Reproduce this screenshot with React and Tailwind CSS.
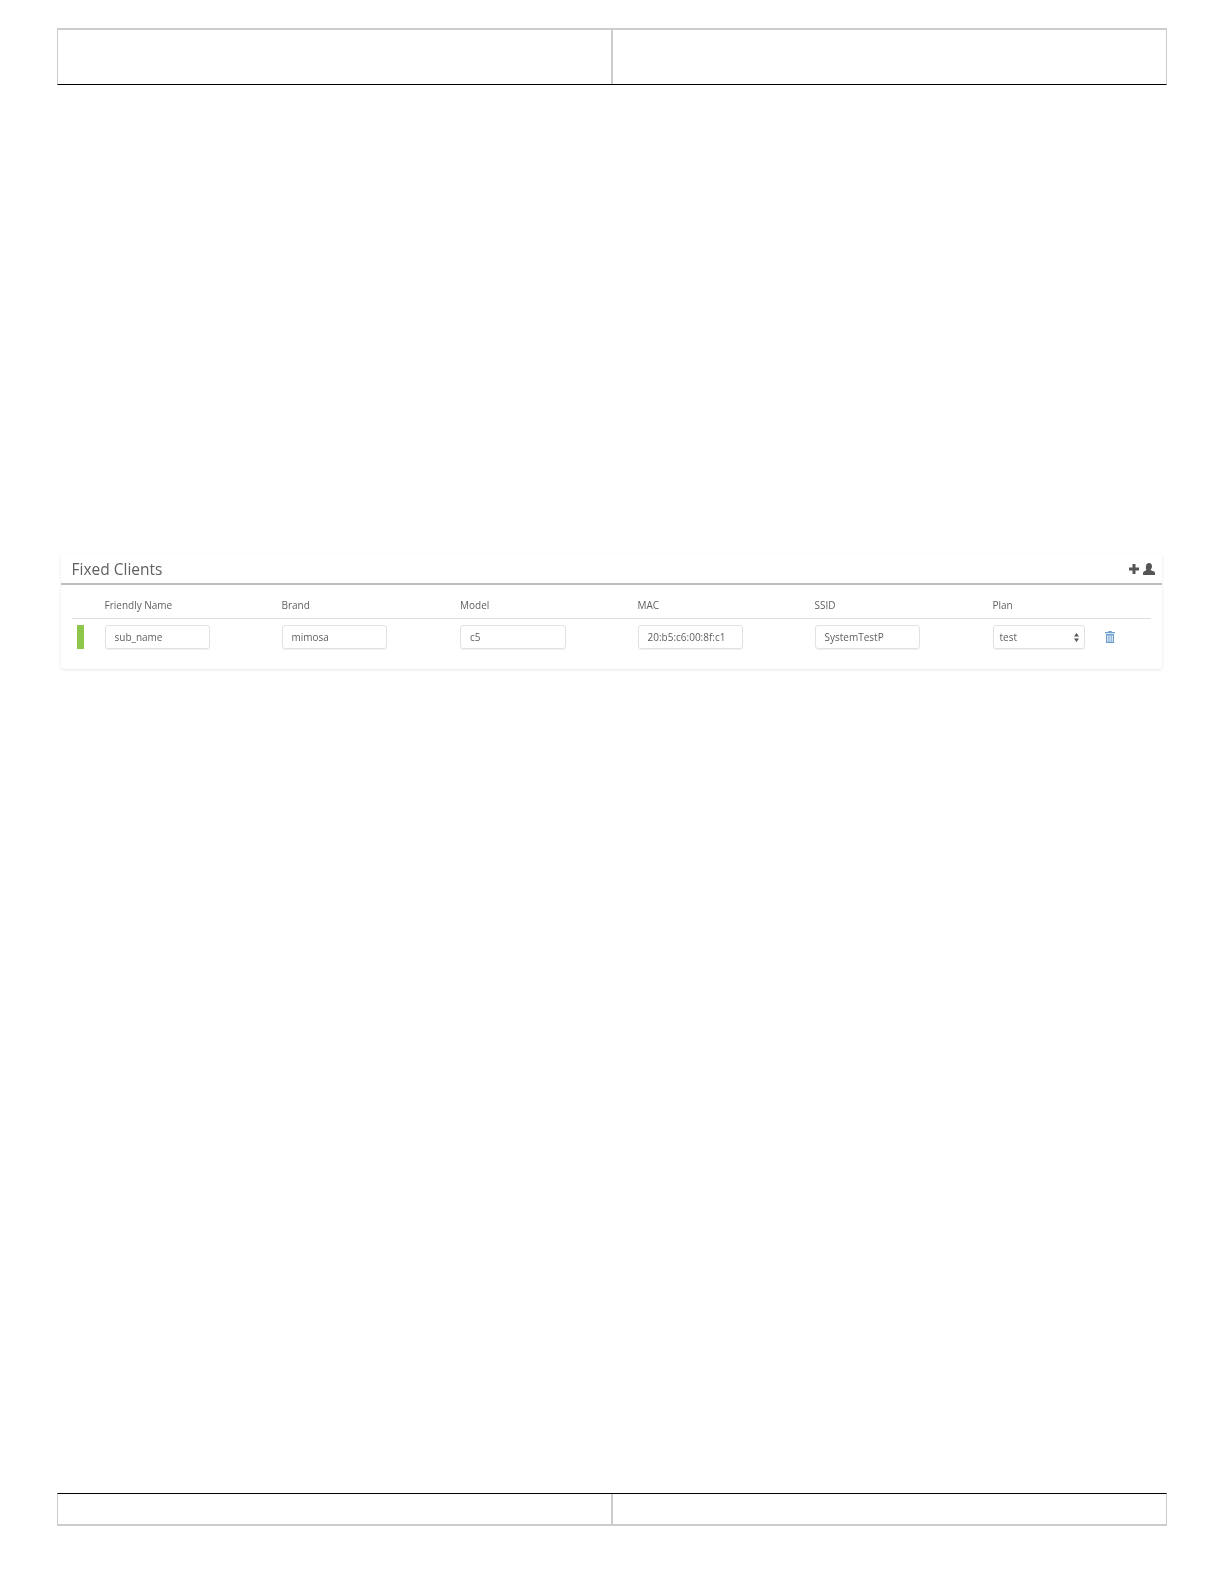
import React from "react";

const columns = [
  { label: "Friendly Name", value: "sub_name" },
  { label: "Brand", value: "mimosa" },
  { label: "Model", value: "c5" },
  { label: "MAC", value: "20:b5:c6:00:8f:c1" },
  { label: "SSID", value: "SystemTestP" },
];

const rowGrid = "grid grid-cols-[33px_177px_178.5px_177.5px_177px_178px_1fr] mx-[11px]";

function BorderTable({ height, topClass, bottomClass }) {
  return (
    <div
      className={`grid grid-cols-[555px_555px] w-[1110px] border-x border-x-[#cccccc] box-border ${height} ${topClass} ${bottomClass}`}
    >
      <div className="border-r-2 border-r-[#cccccc]" />
      <div />
    </div>
  );
}

function PlusUser() {
  return (
    <div className="flex items-center gap-[4px] text-[#555555] -mt-[2px]">
      <svg width="10" height="10" viewBox="0 0 10 10" fill="currentColor">
        <path d="M3.500 0h3v3.500H10v3H6.500V10h-3V6.500H0v-3h3.500z" />
      </svg>
      <svg width="12" height="12" viewBox="0 0 12 12" fill="currentColor">
        <path d="M6 0c1.900 0 3 1.300 3 3.200 0 1.300-.5 2.400-1.200 3.100-.3.3-.3.8.1 1L11 8.600c.7.3 1 .8 1 1.400v2H0v-2c0-.6.3-1.100 1-1.400l2.100-1.300c.4-.2.4-.7.1-1C2.500 5.600 3 4.500 3 3.200 3 1.300 4.100 0 6 0z" />
      </svg>
    </div>
  );
}

function Trash() {
  return (
    <svg width="10" height="12" viewBox="0 0 10 12" fill="#6c9fd0">
      <path d="M3.500 0h3l.5 1h3v1.200H0V1h3z" />
      <path
        d="M1 3h8v9H1zm1.300 1.200v6.600h1.100V4.200zm2.200 0v6.600h1.100V4.200zm2.200 0v6.600h1V4.200z"
        fillRule="evenodd"
      />
    </svg>
  );
}

function FixedClients() {
  return (
    <div className="ml-[3.5px] w-[1101px] mt-[468px] h-[116px] bg-white rounded-[3px] shadow-[0_1px_3px_rgba(0,0,0,0.1)] font-['Open_Sans',sans-serif] blur-[0.35px]">
      <div className="h-[32px] pt-[3px] flex items-center justify-between pl-[11px] pr-[7px] border-b-2 border-b-[#bdbdbd]">
        <h2 className="text-[15.5px] text-[#5f5f5f]">Fixed Clients</h2>
        <PlusUser />
      </div>

      <div className={`${rowGrid} h-[34px] pt-[8px] items-center text-[10px] text-[#5f5f5f] border-b border-b-[#dddddd]`}>
        <div />
        {columns.map((c) => (
          <div key={c.label}>{c.label}</div>
        ))}
        <div>Plan</div>
      </div>

      <div className={`${rowGrid} pt-[6px] items-start text-[10px] text-[#5f5f5f]`}>
        <div className="ml-[5px] w-[7px] h-[24px] bg-[#8dc64a]" />
        {columns.map((c) => (
          <div
            key={c.label}
            className="w-[105.5px] h-[24px] flex items-center pl-[9px] border border-[#e2e2e2] rounded-[3px] shadow-[0_1px_1px_rgba(0,0,0,0.06)]"
          >
            {c.value}
          </div>
        ))}
        <div className="flex items-center gap-[20px]">
          <div className="w-[92px] h-[24px] flex items-center justify-between pl-[6px] pr-[5px] border border-[#e2e2e2] rounded-[3px] shadow-[0_1px_1px_rgba(0,0,0,0.06)]">
            test
            <svg width="5" height="9" viewBox="0 0 5 9" fill="#555555">
              <path d="M2.500 0L5 3.500H0zM2.500 9L0 5.500h5z" />
            </svg>
          </div>
          <Trash />
        </div>
      </div>
    </div>
  );
}

export default function App() {
  return (
    <div className="w-[1224px] h-[1584px] bg-white pl-[57px] pt-[28px]">
      <div className="w-[1110px]">
        <BorderTable
          height="h-[57px]"
          topClass="border-t-2 border-t-[#cccccc]"
          bottomClass="border-b border-b-black"
        />
        <FixedClients />
        <div className="mt-[824px]">
          <BorderTable
            height="h-[33px]"
            topClass="border-t border-t-black"
            bottomClass="border-b-2 border-b-[#cccccc]"
          />
        </div>
      </div>
    </div>
  );
}
